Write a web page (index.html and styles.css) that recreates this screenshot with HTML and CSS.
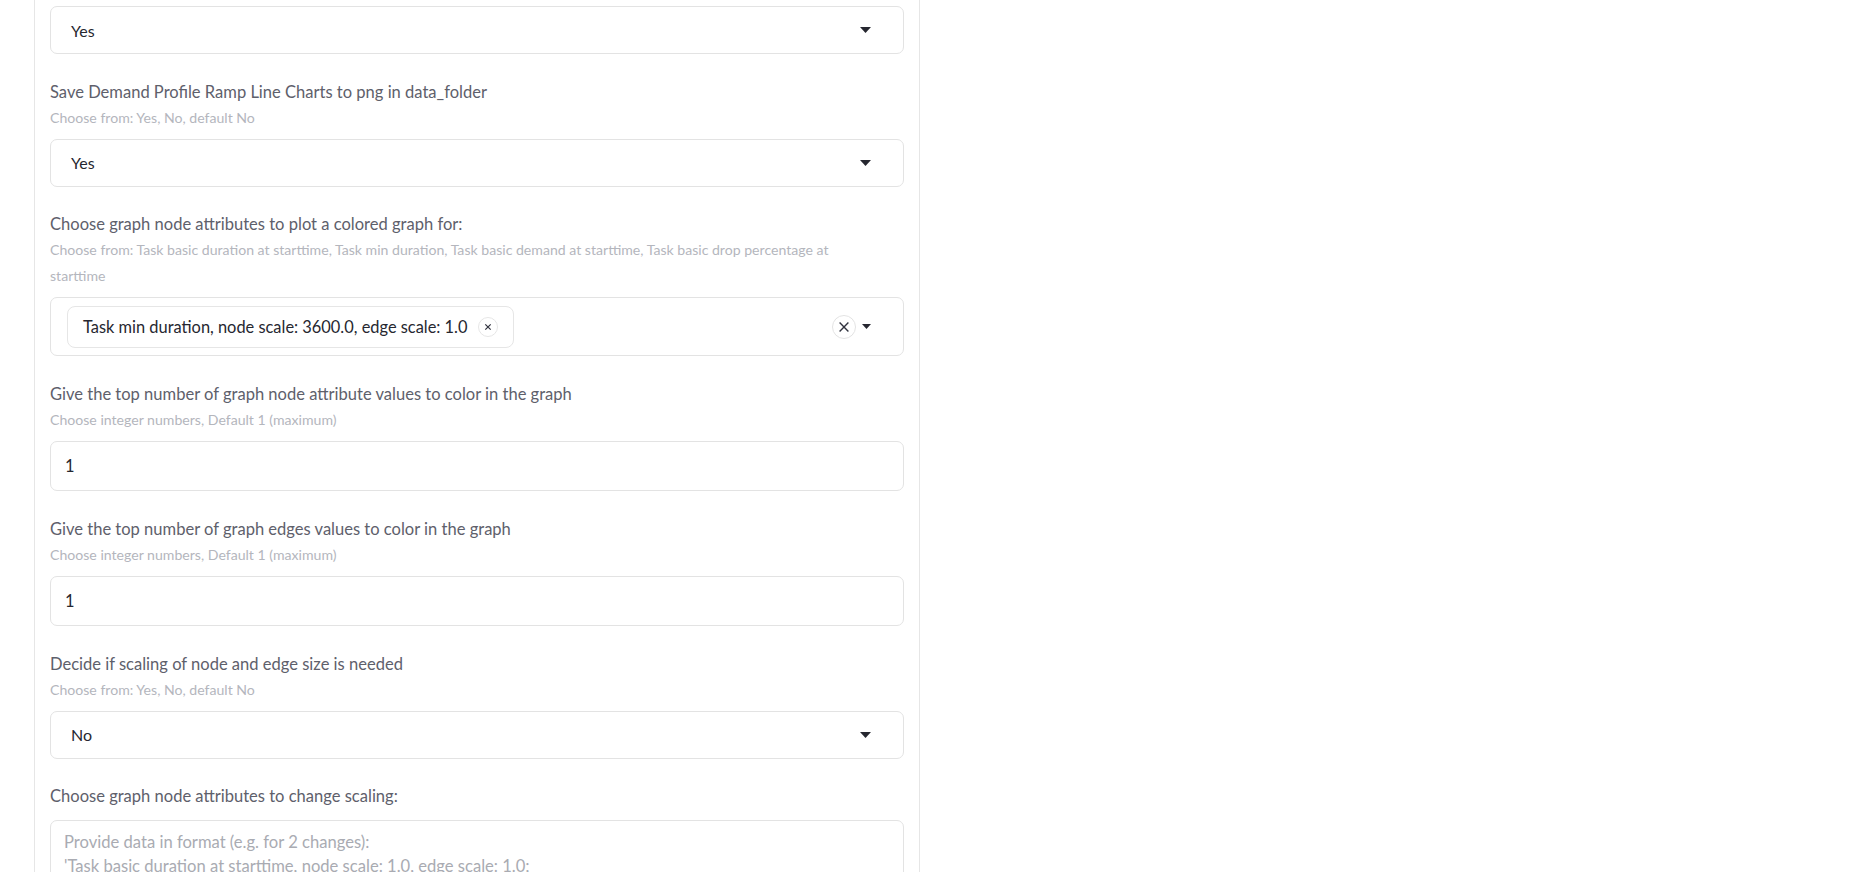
FILE: index.html
```html
<!DOCTYPE html>
<html lang="en">
<head>
    <meta charset="UTF-8">
    <meta name="viewport" content="width=device-width, initial-scale=1.0">
    <title>Graph Settings</title>
    <link rel="stylesheet" href="styles.css">
</head>
<body>
    <div class="panel">
        <div class="field">
            <div class="select-box">
                <span class="select-value">Yes</span>
                <svg class="caret" width="11" height="6" viewBox="0 0 11 6"><path d="M0 0h11L5.5 6z"/></svg>
            </div>
        </div>

        <div class="field">
            <label class="field-label">Save Demand Profile Ramp Line Charts to png in data_folder</label>
            <p class="help">Choose from: Yes, No, default No</p>
            <div class="select-box">
                <span class="select-value">Yes</span>
                <svg class="caret" width="11" height="6" viewBox="0 0 11 6"><path d="M0 0h11L5.5 6z"/></svg>
            </div>
        </div>

        <div class="field">
            <label class="field-label">Choose graph node attributes to plot a colored graph for:</label>
            <p class="help">Choose from: Task basic duration at starttime, Task min duration, Task basic demand at starttime, Task basic drop percentage at<br>starttime</p>
            <div class="multi-box">
                <div class="chip">
                    <span class="chip-text">Task min duration, node scale: 3600.0, edge scale: 1.0</span>
                    <svg class="chip-close" width="20" height="20" viewBox="0 0 20 20">
                        <circle cx="10" cy="10" r="9.5" fill="#fff" stroke="#e6e6e6"/>
                        <path d="M7.3 7.3l5.4 5.4M12.7 7.3l-5.4 5.4" stroke="#31333f" stroke-width="1.2"/>
                    </svg>
                </div>
                <div class="multi-tools">
                    <svg class="clear-all" width="24" height="24" viewBox="0 0 24 24">
                        <circle cx="12" cy="12" r="11.5" fill="#fff" stroke="#e3e3e3"/>
                        <path d="M7.6 7.6l8.8 8.8M16.4 7.6l-8.8 8.8" stroke="#31333f" stroke-width="1.4"/>
                    </svg>
                    <svg class="caret" width="9" height="5" viewBox="0 0 9 5"><path d="M0 0h9L4.5 5z"/></svg>
                </div>
            </div>
        </div>

        <div class="field">
            <label class="field-label">Give the top number of graph node attribute values to color in the graph</label>
            <p class="help">Choose integer numbers, Default 1 (maximum)</p>
            <input class="text-input" type="text" value="1">
        </div>

        <div class="field">
            <label class="field-label">Give the top number of graph edges values to color in the graph</label>
            <p class="help">Choose integer numbers, Default 1 (maximum)</p>
            <input class="text-input" type="text" value="1">
        </div>

        <div class="field">
            <label class="field-label">Decide if scaling of node and edge size is needed</label>
            <p class="help">Choose from: Yes, No, default No</p>
            <div class="select-box">
                <span class="select-value">No</span>
                <svg class="caret" width="11" height="6" viewBox="0 0 11 6"><path d="M0 0h11L5.5 6z"/></svg>
            </div>
        </div>

        <div class="field">
            <label class="field-label no-help">Choose graph node attributes to change scaling:</label>
            <textarea class="text-area" placeholder="Provide data in format (e.g. for 2 changes):&#10;'Task basic duration at starttime, node scale: 1.0, edge scale: 1.0;&#10;Task min duration, node scale: 3600.0, edge scale: 1.0'"></textarea>
        </div>
    </div>
</body>
</html>
```

FILE: styles.css
```css
body {
    margin: 0;
    background-color: #fff;
    font-family: Lato, "Liberation Sans", sans-serif;
    color: #31333f;
    overflow: hidden;
}
.panel {
    width: 854px;
    margin: -20px 0 0 34px;
    padding: 25px 15px 40px;
    border: 1px solid #e6e6e6;
}
.field + .field {
    margin-top: 24.5px;
}
.field-label {
    display: block;
    font-size: 16.55px;
    line-height: 26px;
    color: #5e606b;
}
.field-label.no-help {
    margin-bottom: 11px;
}
.help {
    margin: 0 0 8px;
    font-size: 14.1px;
    line-height: 26px;
    color: #b4b6bd;
}
.select-box {
    display: flex;
    align-items: center;
    justify-content: space-between;
    height: 48px;
    box-sizing: border-box;
    padding: 0 32px 0 20px;
    border: 1px solid #e3e3e3;
    border-radius: 7px;
}
.select-value {
    font-size: 16px;
    color: #262730;
}
.caret {
    fill: #262730;
}
.multi-box {
    display: flex;
    align-items: center;
    justify-content: space-between;
    height: 59px;
    box-sizing: border-box;
    padding: 0 32px 0 16px;
    border: 1px solid #e3e3e3;
    border-radius: 7px;
}
.chip {
    display: flex;
    align-items: center;
    gap: 10px;
    height: 42px;
    box-sizing: border-box;
    padding: 0 15px;
    border: 1px solid #e6e6e6;
    border-radius: 8px;
}
.chip-text {
    font-size: 16.4px;
    color: #262730;
}
.multi-tools {
    display: flex;
    align-items: center;
    gap: 6px;
}
.text-input {
    display: block;
    width: 100%;
    height: 50.5px;
    box-sizing: border-box;
    padding: 0 14px;
    border: 1px solid #e3e3e3;
    border-radius: 7px;
    font-family: Lato, "Liberation Sans", sans-serif;
    font-size: 16.4px;
    color: #262730;
    outline: none;
}
.text-area {
    display: block;
    width: 100%;
    height: 200px;
    box-sizing: border-box;
    padding: 10px 13px;
    border: 1px solid #e3e3e3;
    border-radius: 7px;
    font-family: Lato, "Liberation Sans", sans-serif;
    font-size: 16.6px;
    line-height: 23.5px;
    resize: none;
    outline: none;
}
.text-area::placeholder {
    color: #a9abb2;
}
```
